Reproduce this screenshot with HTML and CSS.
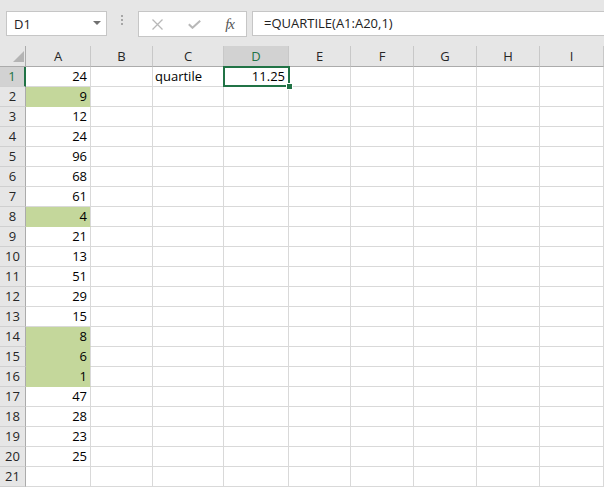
FILE: index.html
```html
<!DOCTYPE html>
<html lang="en">

<head>
    <meta charset="UTF-8">
    <meta name="viewport" content="width=device-width, initial-scale=1.0">
    <title>QUARTILE</title>
    <link rel="stylesheet" href="styles.css">
</head>

<body>
    <div class="toolbar">
        <div class="namebox">
            <span>D1</span>
            <svg width="8" height="5" viewBox="0 0 8 5"><polygon points="0,0 8,0 4,4" fill="#707070" /></svg>
        </div>
        <div class="grip">
            <svg width="3" height="11" viewBox="0 0 3 11">
                <rect x="0" y="0" width="2" height="2" fill="#a6a6a6" />
                <rect x="0" y="4" width="2" height="2" fill="#a6a6a6" />
                <rect x="0" y="8" width="2" height="2" fill="#a6a6a6" />
            </svg>
        </div>
        <div class="fnbox">
            <svg width="11" height="11" viewBox="0 0 11 11">
                <path d="M0.5 0.5 L10.5 10.5 M10.5 0.5 L0.5 10.5" stroke="#b8b8b8" stroke-width="1.3" fill="none" />
            </svg>
            <svg width="13" height="9" viewBox="0 0 13 9">
                <path d="M0.8 4.2 L4.5 7.8 L12.2 0.8" stroke="#b8b8b8" stroke-width="2" fill="none" />
            </svg>
            <span class="fx">fx</span>
        </div>
        <div class="formula">=QUARTILE(A1:A20,1)</div>
    </div>

    <div class="sheet">
        <div class="row head">
            <div class="corner"><svg width="26" height="20" viewBox="0 0 26 20"><polygon points="24,5 24,16 13,16" fill="#b4b4b4" /></svg></div>
            <div>A</div><div>B</div><div>C</div><div class="on">D</div><div>E</div><div>F</div><div>G</div><div>H</div><div>I</div>
        </div>
        <div class="row">
            <div class="rh on">1</div><div class="num">24</div><div></div><div class="txt">quartile</div><div class="num sel">11.25<i class="handle"></i></div><div></div><div></div><div></div><div></div><div></div>
        </div>
        <div class="row">
            <div class="rh">2</div><div class="num fill">9</div><div></div><div></div><div></div><div></div><div></div><div></div><div></div><div></div>
        </div>
        <div class="row">
            <div class="rh">3</div><div class="num">12</div><div></div><div></div><div></div><div></div><div></div><div></div><div></div><div></div>
        </div>
        <div class="row">
            <div class="rh">4</div><div class="num">24</div><div></div><div></div><div></div><div></div><div></div><div></div><div></div><div></div>
        </div>
        <div class="row">
            <div class="rh">5</div><div class="num">96</div><div></div><div></div><div></div><div></div><div></div><div></div><div></div><div></div>
        </div>
        <div class="row">
            <div class="rh">6</div><div class="num">68</div><div></div><div></div><div></div><div></div><div></div><div></div><div></div><div></div>
        </div>
        <div class="row">
            <div class="rh">7</div><div class="num">61</div><div></div><div></div><div></div><div></div><div></div><div></div><div></div><div></div>
        </div>
        <div class="row">
            <div class="rh">8</div><div class="num fill">4</div><div></div><div></div><div></div><div></div><div></div><div></div><div></div><div></div>
        </div>
        <div class="row">
            <div class="rh">9</div><div class="num">21</div><div></div><div></div><div></div><div></div><div></div><div></div><div></div><div></div>
        </div>
        <div class="row">
            <div class="rh">10</div><div class="num">13</div><div></div><div></div><div></div><div></div><div></div><div></div><div></div><div></div>
        </div>
        <div class="row">
            <div class="rh">11</div><div class="num">51</div><div></div><div></div><div></div><div></div><div></div><div></div><div></div><div></div>
        </div>
        <div class="row">
            <div class="rh">12</div><div class="num">29</div><div></div><div></div><div></div><div></div><div></div><div></div><div></div><div></div>
        </div>
        <div class="row">
            <div class="rh">13</div><div class="num">15</div><div></div><div></div><div></div><div></div><div></div><div></div><div></div><div></div>
        </div>
        <div class="row">
            <div class="rh">14</div><div class="num fill">8</div><div></div><div></div><div></div><div></div><div></div><div></div><div></div><div></div>
        </div>
        <div class="row">
            <div class="rh">15</div><div class="num fill">6</div><div></div><div></div><div></div><div></div><div></div><div></div><div></div><div></div>
        </div>
        <div class="row">
            <div class="rh">16</div><div class="num fill">1</div><div></div><div></div><div></div><div></div><div></div><div></div><div></div><div></div>
        </div>
        <div class="row">
            <div class="rh">17</div><div class="num">47</div><div></div><div></div><div></div><div></div><div></div><div></div><div></div><div></div>
        </div>
        <div class="row">
            <div class="rh">18</div><div class="num">28</div><div></div><div></div><div></div><div></div><div></div><div></div><div></div><div></div>
        </div>
        <div class="row">
            <div class="rh">19</div><div class="num">23</div><div></div><div></div><div></div><div></div><div></div><div></div><div></div><div></div>
        </div>
        <div class="row">
            <div class="rh">20</div><div class="num">25</div><div></div><div></div><div></div><div></div><div></div><div></div><div></div><div></div>
        </div>
        <div class="row last">
            <div class="rh">21</div><div></div><div></div><div></div><div></div><div></div><div></div><div></div><div></div><div></div>
        </div>
    </div>
</body>

</html>
```

FILE: styles.css
```css
* {
    margin: 0;
    padding: 0;
    box-sizing: border-box;
}

body {
    min-height: 487px;
    background-color: #fff;
    font-family: "Open Sans", "Noto Sans", sans-serif;
    font-size: 13px;
    color: #000;
}

/* 公式栏 */
.toolbar {
    display: flex;
    align-items: flex-start;
    height: 46px;
    padding-top: 11px;
    background-color: #e6e6e6;
}

.toolbar .namebox {
    display: flex;
    align-items: center;
    justify-content: space-between;
    margin-left: 6px;
    width: 101px;
    height: 25px;
    padding: 0 5px 0 7px;
    background-color: #fff;
    border: 1px solid #c6c6c6;
    color: #222;
}

.toolbar .grip {
    display: flex;
    justify-content: center;
    width: 31px;
    padding-top: 4px;
}

.toolbar .fnbox {
    display: flex;
    align-items: center;
    justify-content: space-between;
    width: 109px;
    height: 26px;
    padding: 0 12px 0 13px;
    background-color: #fff;
    border: 1px solid #c6c6c6;
}

.toolbar .fnbox .fx {
    font-family: "Liberation Serif", "DejaVu Serif", serif;
    font-style: italic;
    font-size: 15px;
    color: #555;
    letter-spacing: -1px;
}

.toolbar .formula {
    flex: 1;
    height: 25px;
    line-height: 23px;
    margin-left: 5px;
    padding-left: 11px;
    background-color: #fff;
    border: 1px solid #c6c6c6;
    border-right: none;
    color: #222;
}

/* 表格 */
.sheet .row {
    display: grid;
    grid-template-columns: 26px 65px 62px 71px 65px 62px 63px 63px 63px 64px;
    height: 20px;
}

.sheet .row > div {
    position: relative;
    height: 20px;
    line-height: 19px;
    border-right: 1px solid #d9d9d9;
    border-bottom: 1px solid #d9d9d9;
    white-space: nowrap;
}

.sheet .head {
    height: 21px;
    background-color: #e6e6e6;
}

.sheet .head > div {
    height: 21px !important;
    line-height: 21px !important;
    text-align: center;
    color: #262626;
    border-right-color: #c8c8c8 !important;
    border-bottom-color: #ababab !important;
}

.sheet .head .corner {
    border-right-color: #ababab !important;
}

.sheet .head .on {
    background-color: #d2d2d2;
    color: #217346;
}

.sheet .rh {
    text-align: center;
    color: #262626;
    background-color: #e6e6e6;
    border-right-color: #ababab !important;
    border-bottom-color: #d0d0d0 !important;
}

.sheet .rh.on {
    background-color: #d2d2d2;
    color: #217346;
    border-right: 2px solid #217346 !important;
}

.sheet .num {
    text-align: right;
    padding-right: 3px;
}

.sheet .txt {
    padding-left: 2px;
}

.sheet .fill {
    background-color: #c4d79b;
    border-bottom-color: #c4d79b !important;
}

/* 选中的单元格 */
.sheet .sel::after {
    content: "";
    position: absolute;
    top: -1px;
    left: -1px;
    right: -2px;
    bottom: -1px;
    border: 2px solid #217346;
}

.sheet .sel .handle {
    position: absolute;
    right: -5px;
    bottom: -4px;
    width: 7px;
    height: 7px;
    background-color: #217346;
    border: 1px solid #fff;
    z-index: 2;
}
```
